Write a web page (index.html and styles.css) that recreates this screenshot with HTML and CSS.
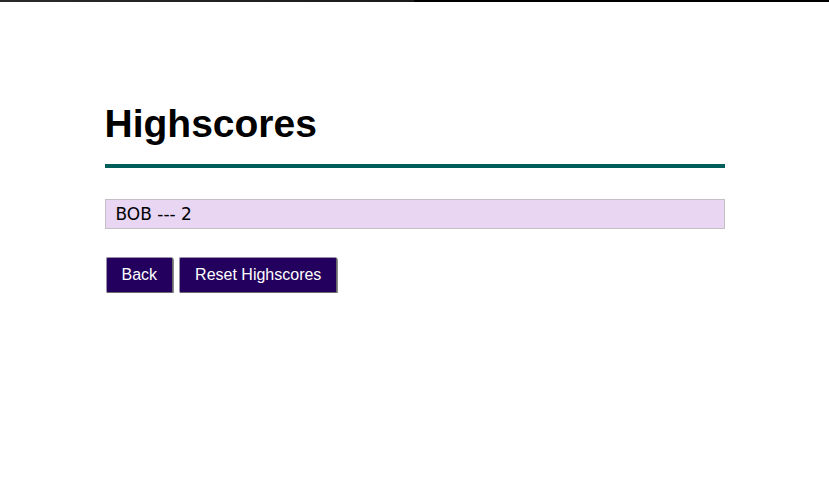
FILE: index.html
```html
<!DOCTYPE html>
<html>
<head>
<meta charset="utf-8">
<link rel="stylesheet" href="styles.css">
</head>
<body>
<div class="topbar"></div>
<main class="page">
  <h1 class="title">Highscores</h1>
  <ul class="scores">
    <li class="score">BOB --- 2</li>
  </ul>
  <div class="actions">
    <button class="btn">Back</button>
    <button class="btn">Reset Highscores</button>
  </div>
</main>
</body>
</html>
```

FILE: styles.css
```css
html, body {
  margin: 0;
  padding: 0;
  background: #ffffff;
}
.topbar {
  height: 2px;
  background: linear-gradient(to right, #2a2a2a 0%, #1a1a1a 50%, #000 50%, #000 100%);
}
.page {
  width: 620px;
  margin: 0 auto;
  padding-top: 100px;
  font-family: "Liberation Sans", Arial, sans-serif;
}
.title {
  margin: 0;
  font-size: 39px;
  font-weight: bold;
  line-height: 44px;
  color: #000;
  padding-bottom: 18px;
  border-bottom: 4px solid #005f5a;
}
.scores {
  list-style: none;
  margin: 31px 0 0;
  padding: 0;
}
.score {
  background: #e8d6f3;
  border: 1px solid #c6bfc8;
  height: 28px;
  line-height: 28px;
  padding: 0 10px;
  font-family: "DejaVu Sans", Verdana, sans-serif;
  font-size: 17px;
  color: #000;
}
.actions {
  display: flex;
  gap: 6px;
  margin-top: 28px;
  padding-left: 1px;
}
.btn {
  background: #23005e;
  color: #fff;
  font-family: "Liberation Sans", Arial, sans-serif;
  font-size: 16px;
  height: 36px;
  padding: 0 15px;
  border: 1px solid #6a6a6a;
  border-top-color: #9a90a8;
  border-left-color: #9a90a8;
  border-radius: 2px;
  box-shadow: 1px 1px 0 #8a8a8a;
}
```
